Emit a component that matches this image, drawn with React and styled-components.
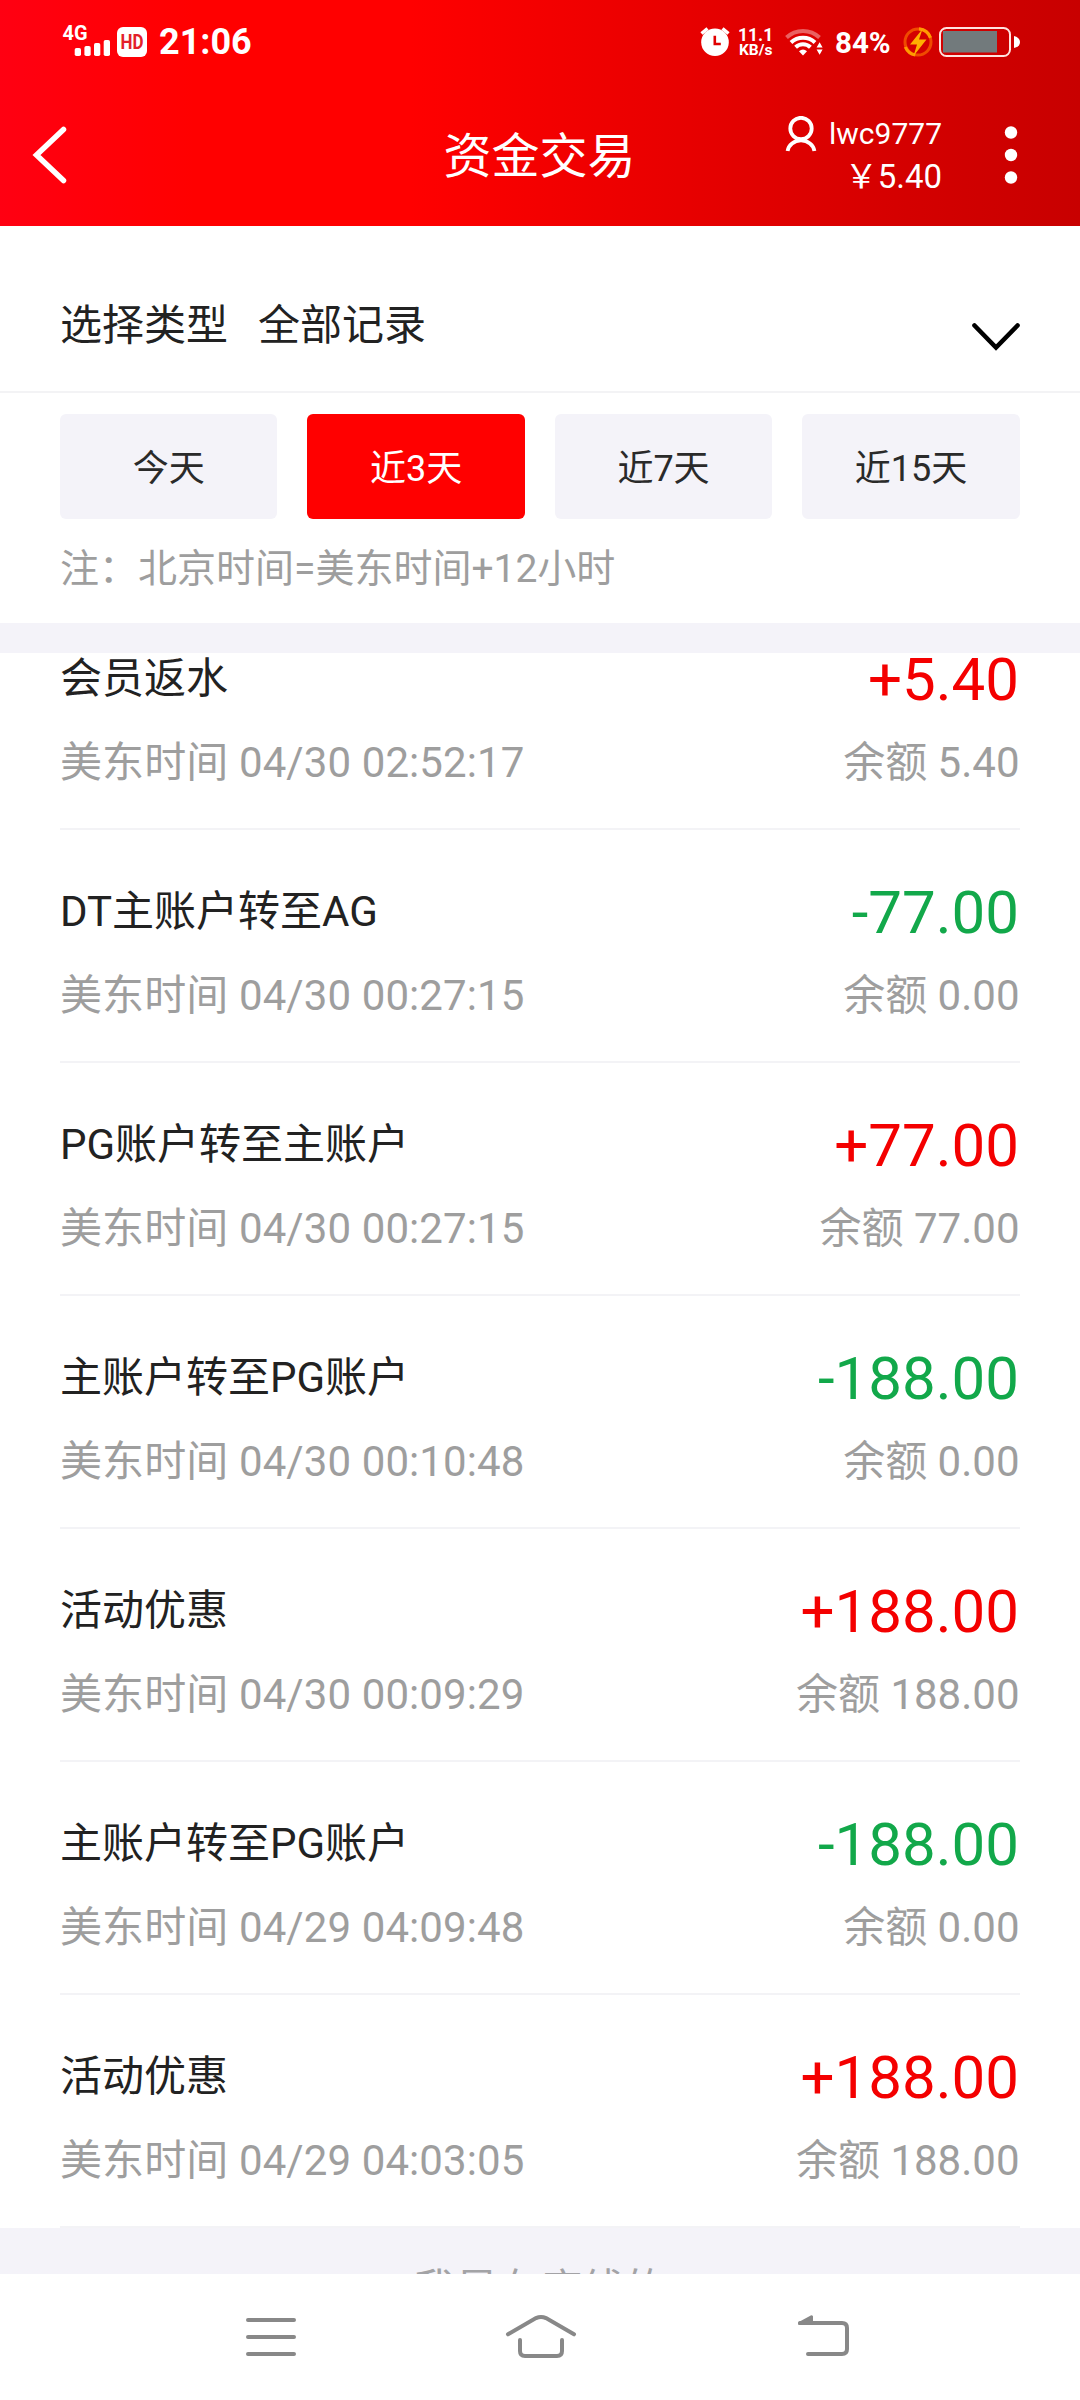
import React, { useState } from "react";
import styled, { createGlobalStyle } from "styled-components";

const days = ["今天", "近3天", "近7天", "近15天"];

const records = [
    { id: 1, title: "会员返水", time: "04/30 02:52:17", amount: "+5.40", balance: "5.40" },
    { id: 2, title: "DT主账户转至AG", time: "04/30 00:27:15", amount: "-77.00", balance: "0.00" },
    { id: 3, title: "PG账户转至主账户", time: "04/30 00:27:15", amount: "+77.00", balance: "77.00" },
    { id: 4, title: "主账户转至PG账户", time: "04/30 00:10:48", amount: "-188.00", balance: "0.00" },
    { id: 5, title: "活动优惠", time: "04/30 00:09:29", amount: "+188.00", balance: "188.00" },
    { id: 6, title: "主账户转至PG账户", time: "04/29 04:09:48", amount: "-188.00", balance: "0.00" },
    { id: 7, title: "活动优惠", time: "04/29 04:03:05", amount: "+188.00", balance: "188.00" },
];

const SignalIcon = () => (
    <svg width="52" height="48" viewBox="60 18 52 48" fill="#fff">
        <text x="62.5" y="40" fontSize="20" fontWeight="700" textLength="25" lengthAdjust="spacingAndGlyphs">4G</text>
        <rect x="74.7" y="48" width="6.3" height="8" rx="1.8" />
        <rect x="84.4" y="46" width="6.3" height="10" rx="1.8" />
        <rect x="94" y="43" width="6.3" height="13" rx="1.8" />
        <rect x="103.7" y="40" width="6.3" height="16" rx="1.8" />
    </svg>
);

const AlarmIcon = () => (
    <svg width="32" height="32" viewBox="699 27 32 32">
        <circle cx="715" cy="43.3" r="13.8" fill="#fff" />
        <path d="M701.5 34.5l6-5M728.5 34.5l-6-5" stroke="#fff" strokeWidth="3.4" fill="none" />
        <path d="M714.8 36.8v8.2h6" stroke="#e00000" strokeWidth="2.6" fill="none" />
    </svg>
);

const WifiIcon = () => (
    <svg width="40" height="32" viewBox="785 27 40 32" fill="none" stroke="#fff" strokeWidth="4">
        <path d="M786.5 38.5a24 24 0 0 1 33 0" opacity=".38" />
        <path d="M791 43.5a17.5 17.5 0 0 1 24 0" />
        <path d="M795.6 48.2a10.6 10.6 0 0 1 14.8 0" />
        <path d="M799 52.2q4-3.4 8 0l-4 4.2z" fill="#fff" stroke="none" />
        <path d="M816.6 48.5l3-5.2 3 5.2zM816.6 50.6l3 5.2 3-5.2z" fill="#fff" stroke="none" />
    </svg>
);

const BoltIcon = () => (
    <svg width="32" height="32" viewBox="902 26 32 32">
        <circle cx="918" cy="42" r="13" fill="none" stroke="#f04a00" strokeWidth="3" />
        <path d="M905.3 47a13.3 13.3 0 0 0 10 8M919 28.8a13.3 13.3 0 0 1 11.5 9" fill="none" stroke="#ff9a00" strokeWidth="3.2" />
        <path d="M922.5 29l-12.500 15.500h7l-3.500 11.500 13-16.500h-7.500z" fill="#ffb000" />
    </svg>
);

const BatteryIcon = () => (
    <svg width="84" height="32" viewBox="938 26 84 32">
        <rect x="940" y="28" width="70" height="28" rx="6.500" fill="none" stroke="#ffe3df" strokeWidth="2" />
        <rect x="943" y="31" width="54" height="21.500" fill="#727a7c" />
        <path d="M1014 36q6 1.500 6 6t-6 6z" fill="#fff" />
    </svg>
);

const BackIcon = () => (
    <svg width="36" height="64" viewBox="31 123 36 64">
        <path d="M63.500 129.500L36.500 155l27 25.500" fill="none" stroke="#fff" strokeWidth="5.500" strokeLinecap="round" />
    </svg>
);

const UserIcon = () => (
    <svg width="32" height="36" viewBox="785 115 32 36" fill="none" stroke="#fff" strokeWidth="3.800">
        <circle cx="801" cy="127.500" r="10.700" />
        <path d="M787.600 150a13.500 12 0 0 1 26.800 0" />
    </svg>
);

const MoreIcon = () => (
    <svg width="14" height="60" viewBox="1004 125 14 60" fill="#fff">
        <circle cx="1011" cy="132.500" r="6.200" />
        <circle cx="1011" cy="155" r="6.200" />
        <circle cx="1011" cy="177.500" r="6.200" />
    </svg>
);

const ArrowDown = () => (
    <svg width="50" height="32" viewBox="971 321 50 32">
        <path d="M974.500 325.500L996 347.500l21.500-22" fill="none" stroke="#000" strokeWidth="4.600" strokeLinecap="round" />
    </svg>
);

const App = () => {
    const [activeDay, setActiveDay] = useState("近3天");

    return (
        <Page>
            <GlobalStyle />
            <Header>
                <StatusBar>
                    <SignalIcon />
                    <Badge viewBox="0 0 30 30">
                        <rect width="30" height="30" rx="6" fill="#fff" />
                        <text x="3.500" y="22" fontSize="19.500" fontWeight="700" fill="#e3202a" textLength="23" lengthAdjust="spacingAndGlyphs">HD</text>
                    </Badge>
                    <Clock>21:06</Clock>
                    <AlarmIcon />
                    <Speed>
                        <span>11.1</span>
                        <small>KB/s</small>
                    </Speed>
                    <WifiIcon />
                    <Percent>84%</Percent>
                    <Power>
                        <BoltIcon />
                        <BatteryIcon />
                    </Power>
                </StatusBar>
                <TitleBar>
                    <Side>
                        <BackIcon />
                    </Side>
                    <h1>资金交易</h1>
                    <Side $end>
                        <User>
                            <Name>
                                <UserIcon />
                                lwc9777
                            </Name>
                            <Money>￥5.40</Money>
                        </User>
                        <MoreIcon />
                    </Side>
                </TitleBar>
            </Header>

            <TypeSelect>
                <span>选择类型</span>
                <span>全部记录</span>
                <ArrowDown />
            </TypeSelect>

            <Filter>
                <Days>
                    {days.map((day) => (
                        <DayButton key={day} $active={day === activeDay} onClick={() => setActiveDay(day)}>
                            {day}
                        </DayButton>
                    ))}
                </Days>
                <Note>注：北京时间=美东时间+12小时</Note>
            </Filter>

            <Scroller>
                <List>
                    {records.map((item) => (
                        <Row key={item.id}>
                            <Title>{item.title}</Title>
                            <Amount $out={item.amount.startsWith("-")}>{item.amount}</Amount>
                            <Sub>美东时间 {item.time}</Sub>
                            <Sub $end>余额 {item.balance}</Sub>
                        </Row>
                    ))}
                </List>
                <EndTip>我是有底线的</EndTip>
            </Scroller>

            <NavBar>
                <svg viewBox="221 2287 100 100">
                    <path d="M248 2320h46M248 2337h46M248 2354h46" />
                </svg>
                <svg viewBox="490 2287 100 100">
                    <path d="M508 2334.300l28-16.200q5-2.400 10 0l28 16.200" />
                    <path d="M520 2340v11q0 5 5 5h32q5 0 5-5v-11" />
                </svg>
                <svg viewBox="759 2287 100 100">
                    <path d="M800 2323h42q5 0 5 5v21q0 5-5 5h-34" />
                    <path d="M799.500 2323.400l12-6.600v6.600z" strokeWidth="3" fill="#888" strokeLinejoin="round" />
                </svg>
            </NavBar>
        </Page>
    );
};

const GlobalStyle = createGlobalStyle`
    * {
        box-sizing: border-box;
    }
    body {
        margin: 0;
        background: #fff;
        font-family: Roboto, "Noto Sans CJK SC", sans-serif;
    }
    svg {
        display: block;
        flex-shrink: 0;
    }
`;

const Page = styled.div`
    width: 1080px;
    height: 2400px;
    display: flex;
    flex-direction: column;
    overflow: hidden;
    color: #222;
    background: #fff;
`;

const Header = styled.header`
    height: 226px;
    color: #fff;
    background: linear-gradient(90deg, #ff0012 0%, #ff0000 18%, #ff0000 38%, #e50000 66%, #d40000 84%, #c80000 100%);
`;

const StatusBar = styled.div`
    display: flex;
    align-items: center;
    height: 84px;
    padding: 0 58px 0 60px;
`;

const Badge = styled.svg`
    width: 30px;
    height: 30px;
    margin-left: 5px;
`;

const Clock = styled.div`
    flex: 1;
    margin-left: 12px;
    font-size: 36px;
    line-height: 42px;
    font-weight: 700;
`;

const Speed = styled.div`
    display: flex;
    flex-direction: column;
    width: 38px;
    margin: 0 9px 0 7px;
    font-weight: 700;
    font-size: 17.5px;
    line-height: 16px;
    white-space: nowrap;

    small {
        padding-left: 1px;
        font-size: 15.5px;
        line-height: 14px;
    }
`;

const Percent = styled.div`
    width: 57px;
    margin: 1px 10px 0;
    font-size: 29.5px;
    line-height: 34px;
    font-weight: 700;
`;

const Power = styled.div`
    display: flex;
    gap: 4px;
`;

const TitleBar = styled.div`
    display: flex;
    align-items: center;
    height: 142px;
    padding: 0 62px 0 31px;

    h1 {
        margin: 0 0 0 30px;
        padding-top: 4px;
        font-size: 48px;
        line-height: 60px;
        font-weight: 400;
    }
`;

const Side = styled.div`
    flex: 1 1 0;
    display: flex;
    align-items: center;
    justify-content: ${(p) => (p.$end ? "flex-end" : "flex-start")};
`;

const User = styled.div`
    display: flex;
    flex-direction: column;
    align-items: flex-end;
    margin-right: 62px;
`;

const Name = styled.div`
    display: flex;
    align-items: center;
    gap: 12px;
    height: 43px;
    font-size: 30px;
    line-height: 43px;
`;

const Money = styled.div`
    font-size: 33px;
    line-height: 43px;
`;

const TypeSelect = styled.div`
    display: flex;
    align-items: center;
    gap: 30px;
    height: 167px;
    padding: 34px 59px 0 60px;
    border-bottom: 2px solid #f3f3f5;
    font-size: 42px;
    line-height: 60px;

    svg {
        margin: 22px 0 0 auto;
    }
`;

const Filter = styled.div`
    height: 260px;
    padding: 21px 60px 0;
    border-bottom: 30px solid #f4f3f9;
`;

const Days = styled.div`
    display: grid;
    grid-template-columns: repeat(4, 1fr);
    gap: 30px;
    margin-right: 0.4px;
`;

const DayButton = styled.button`
    height: 105px;
    padding: 5px 0 0;
    border: 0;
    border-radius: 6px;
    font-family: inherit;
    font-size: 36px;
    line-height: 60px;
    color: ${(p) => (p.$active ? "#fff" : "#2a2a2a")};
    background: ${(p) => (p.$active ? "#ff0000" : "#f4f3f9")};
`;

const Note = styled.div`
    margin-top: 20px;
    font-size: 39px;
    line-height: 60px;
    color: #9e9e9e;
`;

const Scroller = styled.div`
    flex: 1;
    min-height: 0;
    overflow: hidden;
    background: #f4f3f9;
`;

/* the list is scrolled up a little under the filter */
const List = styled.div`
    margin-top: -56px;
    padding: 0 60px;
    background: #fff;
`;

const Row = styled.div`
    display: grid;
    grid-template-columns: 1fr auto;
    grid-template-rows: 64px 60px;
    row-gap: 22px;
    height: 233px;
    padding-top: 50px;
    border-bottom: 2px solid #f3f3f6;
`;

const Title = styled.div`
    font-size: 42px;
    line-height: 64px;
`;

const Amount = styled.div`
    padding-right: 1px;
    font-size: 60px;
    line-height: 65px;
    text-align: right;
    color: ${(p) => (p.$out ? "#12a84a" : "#f40000")};
`;

const Sub = styled.div`
    padding-right: ${(p) => (p.$end ? "0.5px" : "0")};
    font-size: 42px;
    line-height: 60px;
    letter-spacing: ${(p) => (p.$end ? "0" : "0.1px")};
    color: #9e9e9e;
    text-align: ${(p) => (p.$end ? "right" : "left")};
`;

const EndTip = styled.div`
    padding-top: 32px;
    font-size: 42px;
    line-height: 60px;
    text-align: center;
    color: #a3a3a6;
`;

const NavBar = styled.nav`
    display: flex;
    justify-content: space-around;
    align-items: center;
    height: 126px;
    padding: 0 136px;
    background: #fff;

    svg {
        width: 100px;
        height: 100px;
        fill: none;
        stroke: #888;
        stroke-width: 4;
        stroke-linecap: round;
    }
`;

export default App;
